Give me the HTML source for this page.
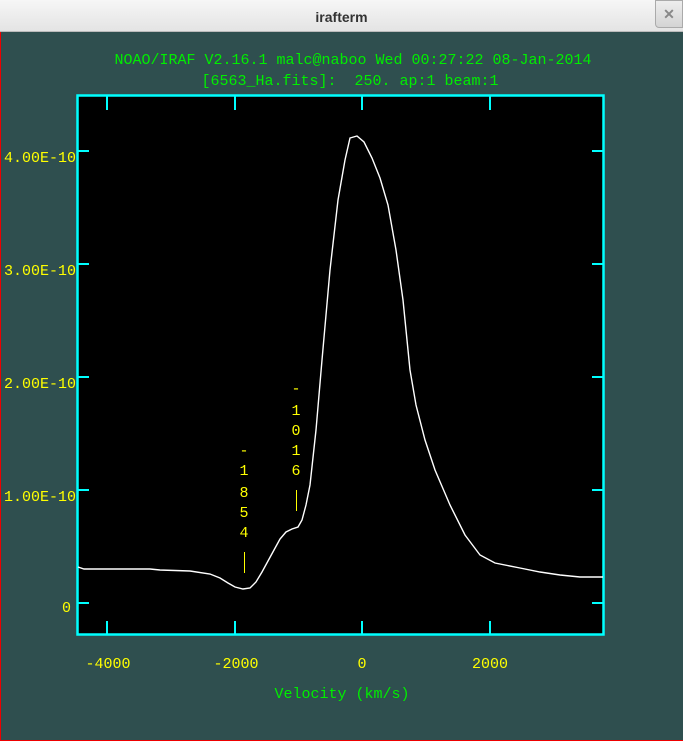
<!DOCTYPE html>
<html><head><style>
html,body{margin:0;padding:0;width:683px;height:741px;overflow:hidden;background:#2f4f4f;}
#tb{position:absolute;left:0;top:0;width:683px;height:32px;background:linear-gradient(#f6f6f6,#e4e4e4);border-bottom:1px solid #bbb;box-sizing:border-box;font-family:"Liberation Sans",sans-serif;font-weight:bold;font-size:14px;color:#333;text-align:center;line-height:34px;}
#x{position:absolute;left:655px;top:0;width:28px;height:28px;background:linear-gradient(#eee,#d4d4d4);border:1px solid #aaa;border-radius:0 0 0 4px;box-sizing:border-box;color:#888;font-size:14px;line-height:26px;text-align:center;}
#main{position:absolute;left:0;top:32px;width:683px;height:709px;border-left:1px solid #e00;border-bottom:1px solid #e00;box-sizing:border-box;}
svg text{font-family:"Liberation Mono",monospace;font-size:15px;white-space:pre;}
</style></head><body>
<div id="tb">irafterm<div id="x">✕</div></div>
<div id="main"></div>
<svg width="683" height="741" style="position:absolute;left:0;top:0" xml:space="preserve">
<text x="353" y="64" fill="#00ee00" text-anchor="middle">NOAO/IRAF V2.16.1 malc@naboo Wed 00:27:22 08-Jan-2014</text>
<text x="350" y="85" fill="#00ee00" text-anchor="middle">[6563_Ha.fits]:  250. ap:1 beam:1</text>
<g fill="#ffff00">
<text x="4" y="162">4.00E-10</text><text x="4" y="275">3.00E-10</text><text x="4" y="388">2.00E-10</text><text x="4" y="501">1.00E-10</text><text x="62" y="612">0</text>
</g>
<rect x="77.5" y="95.5" width="526" height="539" fill="#000" stroke="#00ffff" stroke-width="2.5"/>
<g stroke="#00ffff" stroke-width="2">
<line x1="107" y1="96" x2="107" y2="110"/><line x1="235" y1="96" x2="235" y2="110"/><line x1="362" y1="96" x2="362" y2="110"/><line x1="490" y1="96" x2="490" y2="110"/>
<line x1="107" y1="634" x2="107" y2="621"/><line x1="235" y1="634" x2="235" y2="621"/><line x1="362" y1="634" x2="362" y2="621"/><line x1="490" y1="634" x2="490" y2="621"/>
<line x1="78" y1="151" x2="89" y2="151"/><line x1="78" y1="264" x2="89" y2="264"/><line x1="78" y1="377" x2="89" y2="377"/><line x1="78" y1="490" x2="89" y2="490"/><line x1="78" y1="603" x2="89" y2="603"/>
<line x1="603" y1="151" x2="592" y2="151"/><line x1="603" y1="264" x2="592" y2="264"/><line x1="603" y1="377" x2="592" y2="377"/><line x1="603" y1="490" x2="592" y2="490"/><line x1="603" y1="603" x2="592" y2="603"/>
</g>
<g fill="#ffff00">
<text x="108" y="668" text-anchor="middle">-4000</text><text x="236" y="668" text-anchor="middle">-2000</text><text x="362" y="668" text-anchor="middle">0</text><text x="490" y="668" text-anchor="middle">2000</text>
<g text-anchor="middle"><text x="244" y="455">-</text><text x="244" y="475">1</text><text x="244" y="497">8</text><text x="244" y="517">5</text><text x="244" y="537">4</text>
<text x="296" y="393">-</text><text x="296" y="415">1</text><text x="296" y="435">0</text><text x="296" y="455">1</text><text x="296" y="475">6</text></g>
</g>
<g stroke="#ffff00" stroke-width="1"><line x1="244.5" y1="552" x2="244.5" y2="573"/><line x1="296.5" y1="490" x2="296.5" y2="511"/></g>
<polyline fill="none" stroke="#fff" stroke-width="1.4" points="78,567 84,569 110,569 150,569 160,570 190,571 210,574 220,578 228,583 235,587 243,589 250,588 256,582 262,572 268,561 274,550 280,539 286,532 292,529 298,527 302,520 306,505 310,485 316,430 322,360 330,270 338,200 345,160 350,138 357,136 364,142 372,158 380,178 388,205 396,250 403,300 410,370 416,405 425,440 435,470 450,505 465,535 480,555 495,563 520,568 540,572 560,575 580,577 603,577"/>
<text x="342" y="698" fill="#00ee00" text-anchor="middle">Velocity (km/s)</text>
</svg>
</body></html>
